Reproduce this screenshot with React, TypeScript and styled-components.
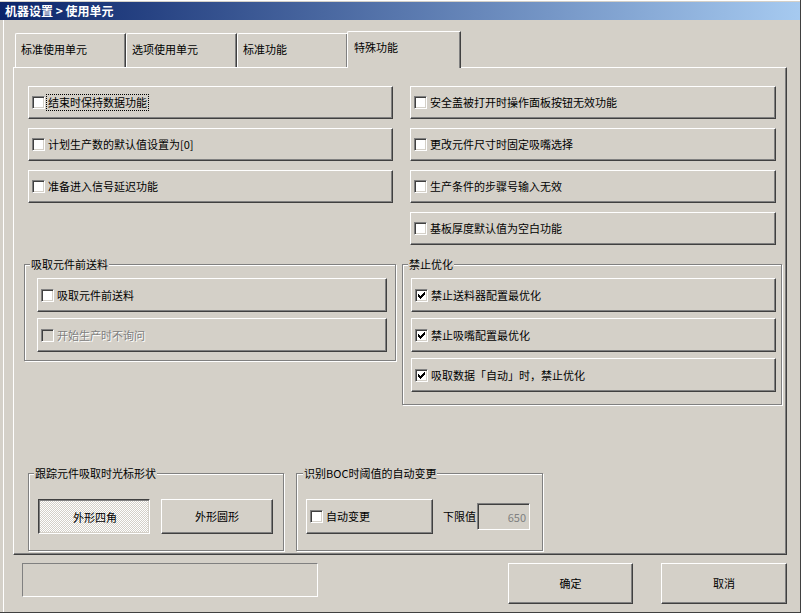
import React from "react";
import styled, { createGlobalStyle } from "styled-components";

const GlobalStyle = createGlobalStyle`
  html, body {
    margin: 0;
    padding: 0;
    background: #d4d0c8;
  }
  body {
    font-family: "Noto Sans CJK SC", "Liberation Sans", sans-serif;
    font-size: 11px;
    color: #000;
  }
  * {
    box-sizing: border-box;
  }
`;

const Window = styled.div`
  width: 801px;
  height: 613px;
  background: #d4d0c8;
  border-right: 1px solid #404040;
  border-bottom: 1px solid #404040;
  padding-top: 2px;
  box-shadow: inset 0 1px 0 #fff;
  overflow: hidden;
`;

const TitleBar = styled.div`
  height: 18px;
  padding-left: 5px;
  background: linear-gradient(to right, #0a246a, #a6caf0);
  color: #fff;
  font-weight: bold;
  font-size: 12px;
  line-height: 18px;
  white-space: pre;
`;

const Body = styled.div`
  margin-left: 3px;
  border-left: 1px solid #fff;
  padding: 11px 13px 0 9px;
  height: 592px;
`;

const TabStrip = styled.div`
  display: flex;
  align-items: flex-end;
  height: 36px;
  margin-left: 2px;
`;

const Tab = styled.div<{ $active?: boolean }>`
  position: relative;
  z-index: ${(p) => (p.$active ? 1 : 0)};
  width: ${(p) => (p.$active ? 114 : 111)}px;
  height: ${(p) => (p.$active ? 37 : 34)}px;
  margin-left: ${(p) => (p.$active ? -1 : 0)}px;
  margin-bottom: ${(p) => (p.$active ? -1 : 0)}px;
  padding: 9px 0 0 ${(p) => (p.$active ? 6 : 5)}px;
  background: #d4d0c8;
  border-top: 1px solid #fff;
  border-left: 1px solid #fff;
  border-right: 1px solid #404040;
  border-top-left-radius: 2px;
  box-shadow: inset -1px 0 0 #808080;
  line-height: 13px;
`;

const Panel = styled.div`
  display: flex;
  flex-direction: column;
  height: 488px;
  padding: 18px 0 0 10px;
  border-top: 1px solid #fff;
  border-left: 1px solid #fff;
  border-right: 1px solid #404040;
  border-bottom: 1px solid #404040;
  box-shadow: inset -1px -1px 0 #808080;
`;

const TopGrid = styled.div`
  display: grid;
  grid-template-columns: 372px 380px;
  column-gap: 6px;
  row-gap: 19px;
  align-items: start;
`;

const ButtonColumn = styled.div<{ $inset: number }>`
  display: flex;
  flex-direction: column;
  gap: 9px;
  padding-left: ${(p) => p.$inset}px;
`;

const GroupBox = styled.div<{ $w: number; $pad: string }>`
  position: relative;
  width: ${(p) => p.$w}px;
  padding: ${(p) => p.$pad};
  border: 1px solid #808080;
  box-shadow: inset 1px 1px 0 #fff, 1px 1px 0 #fff;
`;

const GroupStack = styled.div`
  display: flex;
  flex-direction: column;
  gap: 6px;
`;

const GroupRow = styled.div`
  display: flex;
  align-items: center;
`;

const Caption = styled.span<{ $left: number }>`
  position: absolute;
  top: -7px;
  left: ${(p) => p.$left}px;
  padding: 0 1px;
  background: #d4d0c8;
  line-height: 13px;
  white-space: nowrap;
`;

const CheckButton = styled.div<{ $w: number; $h: number }>`
  display: flex;
  align-items: center;
  width: ${(p) => p.$w}px;
  height: ${(p) => p.$h}px;
  padding-left: 3px;
  background: #d4d0c8;
  border: 1px solid;
  border-color: #fff #404040 #404040 #fff;
  box-shadow: inset -1px -1px 0 #808080;
  line-height: 13px;
  white-space: nowrap;
`;

const Box = styled.span<{ $disabled?: boolean }>`
  display: flex;
  align-items: center;
  justify-content: center;
  flex: none;
  width: 13px;
  height: 13px;
  background: ${(p) => (p.$disabled ? "#d4d0c8" : "#fff")};
  border: 1px solid;
  border-color: #808080 #fff #fff #808080;
  box-shadow: inset 1px 1px 0 #404040, inset -1px -1px 0 #d4d0c8;
`;

const Label = styled.span<{ $focus?: boolean; $disabled?: boolean }>`
  margin-left: 2px;
  padding: 1px 1px;
  outline: ${(p) => (p.$focus ? "1px dotted #000" : "none")};
  color: ${(p) => (p.$disabled ? "#808080" : "#000")};
  text-shadow: ${(p) => (p.$disabled ? "1px 1px 0 #fff" : "none")};
`;

const BottomRow = styled.div`
  display: flex;
  gap: 12px;
  margin-top: auto;
  margin-bottom: 3px;
  padding-left: 4px;
`;

const Group = styled.div<{ $w: number }>`
  position: relative;
  width: ${(p) => p.$w}px;
  height: 78px;
  padding: 25px 0 0 9px;
  border: 1px solid #808080;
  box-shadow: inset 1px 1px 0 #fff, 1px 1px 0 #fff;
`;

const PushButton = styled.div<{ $w: number; $h: number; $pressed?: boolean }>`
  display: flex;
  align-items: center;
  justify-content: center;
  width: ${(p) => p.$w}px;
  height: ${(p) => p.$h}px;
  border: 1px solid;
  border-color: ${(p) =>
    p.$pressed ? "#404040 #fff #fff #404040" : "#fff #404040 #404040 #fff"};
  box-shadow: ${(p) =>
    p.$pressed
      ? "inset 1px 1px 0 #808080, inset -1px -1px 0 #d4d0c8"
      : "inset -1px -1px 0 #808080"};
  background: ${(p) =>
    p.$pressed
      ? "repeating-conic-gradient(#fff 0% 25%, #d4d0c8 0% 50%) 0 0 / 2px 2px"
      : "#d4d0c8"};
  padding-top: ${(p) => (p.$pressed ? 2 : 0)}px;
  padding-left: ${(p) => (p.$pressed ? 2 : 0)}px;
  line-height: 13px;
`;

const ButtonPair = styled.div`
  display: flex;
  gap: 11px;
`;

const FieldLabel = styled.span`
  margin-left: 10px;
  line-height: 13px;
`;

const NumberField = styled.div`
  width: 53px;
  height: 27px;
  margin-left: 1px;
  display: flex;
  align-items: center;
  justify-content: flex-end;
  padding-right: 3px;
  color: #808080;
  border: 1px solid;
  border-color: #808080 #fff #fff #808080;
  box-shadow: inset 1px 1px 0 #404040, inset -1px -1px 0 #d4d0c8;
`;

const Footer = styled.div`
  display: flex;
  align-items: flex-start;
  margin-top: 8px;
  gap: 28px;
`;

const StatusBox = styled.div`
  width: 296px;
  height: 34px;
  margin-left: 9px;
  margin-right: auto;
  border: 1px solid;
  border-color: #808080 #fff #fff #808080;
`;

const CheckMark = () => (
  <svg width="7" height="7" viewBox="0 0 7 7" shapeRendering="crispEdges">
    <polygon points="0,2 2,4 6,0 7,0 7,3 2,7 0,5" fill="#000" />
  </svg>
);

type Opt = { text: string; checked?: boolean; disabled?: boolean; focus?: boolean };

const CheckOption = ({ opt, w, h }: { opt: Opt; w: number; h: number }) => (
  <CheckButton $w={w} $h={h}>
    <Box $disabled={opt.disabled}>{opt.checked && <CheckMark />}</Box>
    <Label $focus={opt.focus} $disabled={opt.disabled}>
      {opt.text}
    </Label>
  </CheckButton>
);

const leftOptions: Opt[] = [
  { text: "结束时保持数据功能", focus: true },
  { text: "计划生产数的默认值设置为[0]" },
  { text: "准备进入信号延迟功能" },
];

const rightOptions: Opt[] = [
  { text: "安全盖被打开时操作面板按钮无效功能" },
  { text: "更改元件尺寸时固定吸嘴选择" },
  { text: "生产条件的步骤号输入无效" },
  { text: "基板厚度默认值为空白功能" },
];

const feedOptions: Opt[] = [
  { text: "吸取元件前送料" },
  { text: "开始生产时不询问", disabled: true },
];

const optimizeOptions: Opt[] = [
  { text: "禁止送料器配置最优化", checked: true },
  { text: "禁止吸嘴配置最优化", checked: true },
  { text: "吸取数据「自动」时，禁止优化", checked: true },
];

const tabs = ["标准使用单元", "选项使用单元", "标准功能", "特殊功能"];

export default function App() {
  return (
    <>
      <GlobalStyle />
      <Window>
        <TitleBar>{"机器设置 > 使用单元"}</TitleBar>
        <Body>
          <TabStrip>
            {tabs.map((t, i) => (
              <Tab key={t} $active={i === 3}>
                {t}
              </Tab>
            ))}
          </TabStrip>
          <Panel>
            <TopGrid>
              <ButtonColumn $inset={4}>
                {leftOptions.map((o) => (
                  <CheckOption key={o.text} opt={o} w={365} h={33} />
                ))}
              </ButtonColumn>
              <ButtonColumn $inset={8}>
                {rightOptions.map((o) => (
                  <CheckOption key={o.text} opt={o} w={366} h={33} />
                ))}
              </ButtonColumn>
              <GroupBox $w={372} $pad="13px 0 8px 12px">
                <Caption $left={5}>吸取元件前送料</Caption>
                <GroupStack>
                  {feedOptions.map((o) => (
                    <CheckOption key={o.text} opt={o} w={350} h={34} />
                  ))}
                </GroupStack>
              </GroupBox>
              <GroupBox $w={380} $pad="13px 0 12px 8px">
                <Caption $left={5}>禁止优化</Caption>
                <GroupStack>
                  {optimizeOptions.map((o) => (
                    <CheckOption key={o.text} opt={o} w={365} h={34} />
                  ))}
                </GroupStack>
              </GroupBox>
            </TopGrid>
            <BottomRow>
              <Group $w={256}>
                <Caption $left={5}>跟踪元件吸取时光标形状</Caption>
                <ButtonPair>
                  <PushButton $w={112} $h={35} $pressed>
                    外形四角
                  </PushButton>
                  <PushButton $w={112} $h={35}>
                    外形圆形
                  </PushButton>
                </ButtonPair>
              </Group>
              <Group $w={247}>
                <Caption $left={6}>识别BOC时阈值的自动变更</Caption>
                <GroupRow>
                  <CheckOption opt={{ text: "自动变更" }} w={127} h={35} />
                  <FieldLabel>下限值</FieldLabel>
                  <NumberField>650</NumberField>
                </GroupRow>
              </Group>
            </BottomRow>
          </Panel>
          <Footer>
            <StatusBox />
            <PushButton $w={125} $h={41}>
              确定
            </PushButton>
            <PushButton $w={126} $h={41}>
              取消
            </PushButton>
          </Footer>
        </Body>
      </Window>
    </>
  );
}
